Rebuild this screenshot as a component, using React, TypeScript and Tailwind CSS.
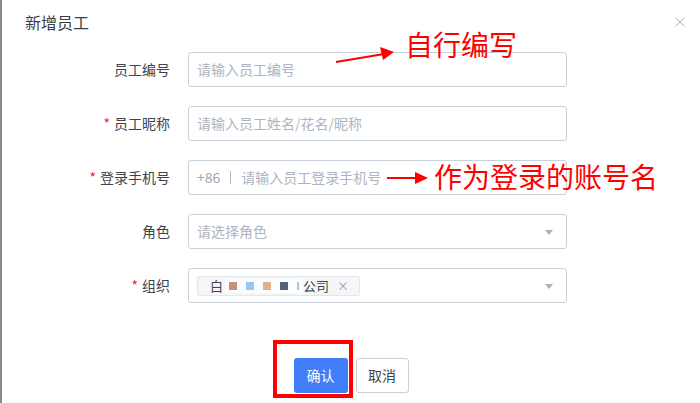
import { X } from "lucide-react";

const font = { fontFamily: '"Noto Sans CJK SC", "Noto Sans", sans-serif' };

function Caret() {
  return (
    <svg width="8" height="5" viewBox="0 0 8 5" className="absolute right-[13px] top-[15px]">
      <path d="M0 0 L8 0 L4 5 Z" fill="#a9b0bd" />
    </svg>
  );
}

function Row({ label, required, children }: { label: string; required?: boolean; children: React.ReactNode }) {
  return (
    <div className="flex items-center">
      <div className="flex w-[168px] justify-end text-[14px] text-[#3d4450]">
        {required && <span className="mr-[4px] text-[#f5222d]">*</span>}
        {label}
      </div>
      <div className="relative ml-[18px] flex h-[35px] w-[379px] items-center rounded-[3px] border border-[#c8d0da] px-[8px] text-[14px]">
        {children}
      </div>
    </div>
  );
}

export default function App() {
  return (
    <div style={font} className="relative h-[403px] w-[700px] overflow-hidden border-l-2 border-[#8a8a8a] bg-white">
      {/* header */}
      <div className="flex items-center justify-between pl-[23px] pr-[12px] pt-[11px]">
        <span className="text-[16px] leading-[22px] text-[#3a3f48]">新增员工</span>
        <X size={16} strokeWidth={1.3} className="text-[#97a0ad]" />
      </div>

      {/* form */}
      <div className="mt-[19px] flex flex-col gap-[19px]">
        <Row label="员工编号">
          <span className="text-[#aeb4be]">请输入员工编号</span>
        </Row>
        <Row label="员工昵称" required>
          <span className="text-[#aeb4be]">请输入员工姓名/花名/昵称</span>
        </Row>
        <Row label="登录手机号" required>
          <span className="text-[#9ea5b0]">+86</span>
          <span className="mx-[10px] h-[13px] w-px bg-[#b4bac4]" />
          <span className="text-[#aeb4be]">请输入员工登录手机号</span>
        </Row>
        <Row label="角色">
          <span className="text-[#aeb4be]">请选择角色</span>
          <Caret />
        </Row>
        <Row label="组织" required>
          <div className="flex h-[20px] items-center rounded-[2px] border border-[#e3e6eb] bg-[#f5f6f8] pl-[12px] pr-[10px] text-[13px] text-[#3d4450]">
            <span>白</span>
            <span className="ml-[2px] flex h-[14px] items-center gap-[9px] bg-white/80 px-[4px]">
              <span className="h-[8px] w-[8px] bg-[#c8907a]" />
              <span className="h-[8px] w-[8px] bg-[#98c9f4]" />
              <span className="h-[8px] w-[8px] bg-[#e1b08f]" />
              <span className="h-[8px] w-[8px] bg-[#586377]" />
              <span className="h-[8px] w-[2px] bg-[#9fc9f0]" />
            </span>
            <span>公司</span>
            <span className="ml-[8px] text-[12px] text-[#9aa1ab]">×</span>
          </div>
          <Caret />
        </Row>
      </div>

      {/* footer */}
      <div className="mt-[55px] flex justify-center gap-[8px]">
        <button className="h-[35px] w-[54px] rounded-[3px] bg-[#3f7ef8] text-[14px] text-white">确认</button>
        <button className="h-[35px] w-[53px] rounded-[3px] border border-[#c8d0da] bg-white text-[14px] text-[#3d4450]">取消</button>
      </div>

      {/* red annotations */}
      <div className="absolute left-[271px] top-[340px] h-[58px] w-[80px] border-[4px] border-[#ff0000]" />
      <svg className="absolute left-0 top-0" width="700" height="403">
        <line x1="334" y1="62" x2="382" y2="54" stroke="#ff0000" strokeWidth="2" />
        <path d="M378 47 L392 52 L381 60 Z" fill="#ff0000" />
        <line x1="385" y1="178" x2="414" y2="178" stroke="#ff0000" strokeWidth="2" />
        <path d="M413 172 L426 178 L413 184 Z" fill="#ff0000" />
      </svg>
      <span className="absolute left-[403px] top-[27px] text-[28px] leading-[34px] text-[#ff0000]">自行编写</span>
      <span className="absolute left-[432px] top-[159px] text-[28px] leading-[34px] text-[#ff0000]">作为登录的账号名</span>
    </div>
  );
}
